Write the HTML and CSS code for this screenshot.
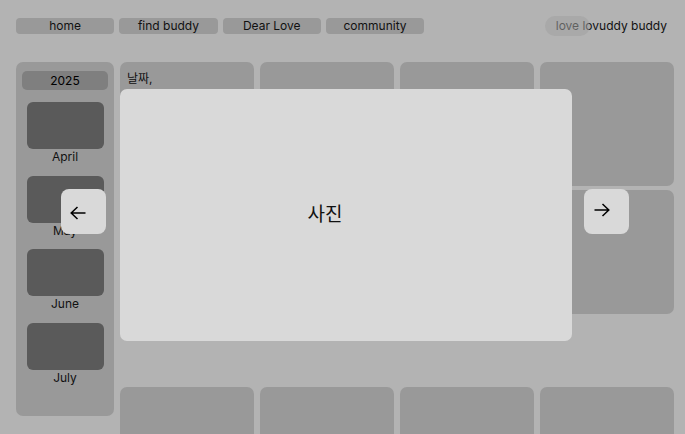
FILE: index.html
```html
<!DOCTYPE html>
<html lang="ko">
<head>
<meta charset="utf-8">
<title>love buddy</title>
<link rel="stylesheet" href="styles.css">
</head>
<body>
<div class="page">
  <header class="topbar">
    <nav class="nav">
      <a class="nav-btn">home</a>
      <a class="nav-btn">find buddy</a>
      <a class="nav-btn">Dear Love</a>
      <a class="nav-btn">community</a>
    </nav>
    <div class="brand">
      <span class="brand-text">love lovuddy buddy</span>
      <span class="brand-pill"></span>
    </div>
  </header>

  <main class="main">
    <aside class="sidebar">
      <div class="year">2025</div>
      <div class="month"><div class="month-thumb"></div><div class="month-label">April</div></div>
      <div class="month"><div class="month-thumb"></div><div class="month-label">May</div></div>
      <div class="month"><div class="month-thumb"></div><div class="month-label">June</div></div>
      <div class="month"><div class="month-thumb"></div><div class="month-label">July</div></div>
    </aside>

    <section class="content">
      <div class="grid">
        <div class="card"><span class="card-date">날짜,</span></div>
        <div class="card"></div>
        <div class="card"></div>
        <div class="card"></div>
        <div class="card"></div>
        <div class="card"></div>
        <div class="card"></div>
        <div class="card"></div>
      </div>
      <div class="grid grid-more">
        <div class="card"></div>
        <div class="card"></div>
        <div class="card"></div>
        <div class="card"></div>
      </div>
    </section>
  </main>

  <div class="modal"><span class="modal-text">사진</span></div>
  <button class="arrow arrow-left" aria-label="previous">
    <svg width="16" height="14" viewBox="0 0 16 14"><path d="M15.5 7H1.2M7.5 1L1.2 7L7.5 13" fill="none" stroke="#000" stroke-width="1.5"/></svg>
  </button>
  <button class="arrow arrow-right" aria-label="next">
    <svg width="16" height="14" viewBox="0 0 16 14"><path d="M0.5 7H14.8M8.5 1L14.8 7L8.5 13" fill="none" stroke="#000" stroke-width="1.5"/></svg>
  </button>
</div>
</body>
</html>
```

FILE: styles.css
```css
html, body {
  margin: 0;
  padding: 0;
  height: 100%;
  overflow: hidden;
  background: #b3b3b3;
}

body {
  font-family: Inter, "Noto Sans CJK KR", sans-serif;
  font-size: 12px;
  color: #000;
}

.page {
  position: relative;
  height: 100%;
  padding: 18px 11px 0 16px;
  box-sizing: border-box;
}

.topbar {
  display: flex;
  justify-content: space-between;
  align-items: center;
  height: 16px;
}

.nav {
  display: flex;
  gap: 5px;
}

.nav-btn {
  width: 98.3px;
  height: 16px;
  line-height: 16px;
  text-align: center;
  background: #999999;
  border-radius: 4px;
  color: #111;
}

.brand {
  position: relative;
  padding-right: 7px;
  line-height: 16px;
}

.brand-text {
  position: relative;
  color: #111;
}

.brand-pill {
  position: absolute;
  left: -11px;
  top: -2px;
  width: 45px;
  height: 20px;
  border-radius: 10px;
  background: rgba(160, 160, 160, 0.55);
}

.main {
  display: flex;
  gap: 6px;
  margin-top: 28px;
}

.sidebar {
  width: 98px;
  height: 354px;
  flex: none;
  box-sizing: border-box;
  background: #999999;
  border-radius: 7px;
  padding: 9px 6px 0;
  display: flex;
  flex-direction: column;
  align-items: center;
}

.year {
  align-self: stretch;
  height: 19px;
  line-height: 19px;
  text-align: center;
  background: #7f7f7f;
  border-radius: 5px;
  margin-bottom: 12px;
}

.month {
  display: flex;
  flex-direction: column;
  align-items: center;
  margin-bottom: 10.7px;
}

.month-thumb {
  width: 77px;
  height: 47px;
  background: #5a5a5a;
  border-radius: 6px;
}

.month-label {
  line-height: 16px;
  height: 16px;
  color: #111;
}

.content {
  width: 554px;
  flex: none;
}

.grid {
  display: grid;
  grid-template-columns: repeat(4, 134px);
  grid-auto-rows: 124px;
  column-gap: 6px;
  row-gap: 4px;
}

.grid-more {
  margin-top: 73px;
}

.card {
  background: #999999;
  border-radius: 7px;
  padding: 9px 7px;
  box-sizing: border-box;
}

.card-date {
  line-height: 14px;
  color: #111;
}

.modal {
  position: absolute;
  left: 120px;
  top: 89px;
  width: 452px;
  height: 252px;
  background: #d9d9d9;
  border-radius: 7px;
  display: flex;
  align-items: center;
  justify-content: center;
  padding: 0 42px 6px 0;
  box-sizing: border-box;
}

.modal-text {
  font-size: 19px;
  color: #111;
}

.arrow {
  position: absolute;
  top: 189px;
  width: 45px;
  height: 45px;
  border: none;
  border-radius: 8px;
  background: #d9d9d9;
  padding: 0;
  display: flex;
  align-items: center;
  justify-content: flex-start;
}

.arrow svg {
  display: block;
}

.arrow-left {
  left: 61px;
  padding: 2px 0 0 9px;
}

.arrow-right {
  left: 584px;
  padding: 0 0 4px 10px;
}
```
